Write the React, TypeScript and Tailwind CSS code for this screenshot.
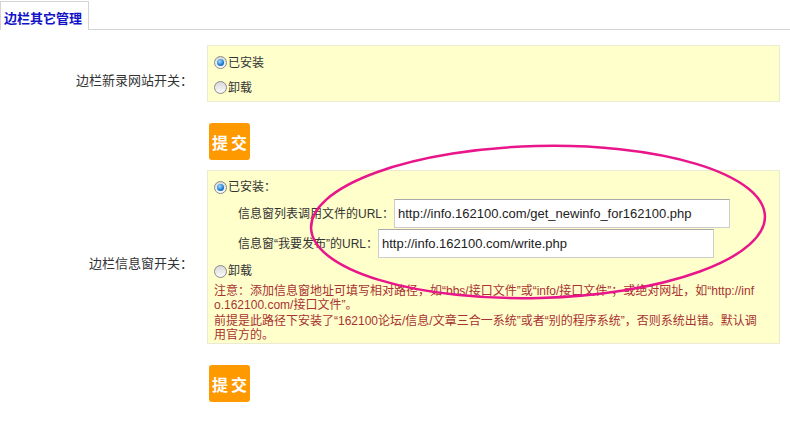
import React from "react";

const Radio = ({ checked }: { checked?: boolean }) => (
  <span className="inline-flex w-[13px] h-[13px] shrink-0 items-center justify-center rounded-full border border-[#8a8a8a] bg-linear-to-b from-[#d9d9d9] to-[#fbfbfb]">
    {checked && (
      <span className="block w-[7px] h-[7px] rounded-full bg-[radial-gradient(circle_at_40%_35%,#9fdcff,#1a78d0_60%,#0b4f9c)]" />
    )}
  </span>
);

const SubmitBtn = () => (
  <button className="ml-[2px] w-[41px] h-[37px] rounded-[3px] bg-[#ff9900] text-white font-bold text-[16px] leading-none tracking-[3px] pl-[3px] font-['Noto_Sans_CJK_SC',sans-serif]">
    提交
  </button>
);

export default function App() {
  return (
    <div className="relative w-[790px] h-[433px] overflow-hidden bg-white text-[#333] font-['Liberation_Sans','Noto_Sans_CJK_SC',sans-serif]">
      {/* Tab bar */}
      <div className="flex h-[30px] border-b border-[#d4d4d4]">
        <div className="mt-[1px] h-[29px] w-[89px] border-l border-t border-r border-[#d4d4d4] bg-white pl-[3px] pt-[8px] text-[13px] leading-[16px] font-bold text-[#1212c8] font-['Noto_Sans_CJK_SC',sans-serif]">
          边栏其它管理
        </div>
      </div>

      <div className="mt-[15px] grid grid-cols-[207px_573px]">
        {/* Row 1 */}
        <div className="flex items-center justify-end pr-[14px] pt-[13px] text-[13px] leading-[18px] font-['Noto_Sans_CJK_SC',sans-serif]">
          边栏新录网站开关：
        </div>
        <div className="border border-[#ebebd2] bg-[#ffffcc] pl-[6px] pt-[4px] pb-[1px] text-[12px]">
          <div className="flex h-[25px] items-center">
            <Radio checked />
            <span className="ml-[1px] leading-[16px]">已安装</span>
          </div>
          <div className="flex h-[25px] items-center">
            <Radio />
            <span className="ml-[1px] leading-[16px]">卸载</span>
          </div>
        </div>

        <div />
        <div className="mt-[21px]">
          <SubmitBtn />
        </div>

        {/* Row 2 */}
        <div className="mt-[10px] flex items-center justify-end pr-[14px] pt-[12px] text-[13px] leading-[18px] font-['Noto_Sans_CJK_SC',sans-serif]">
          边栏信息窗开关：
        </div>
        <div className="mt-[10px] border border-[#ebebd2] bg-[#ffffcc] pl-[6px] pr-[4px] pt-[7px] text-[12px]">
          <div className="flex h-[18px] items-center">
            <Radio checked />
            <span className="ml-[1px] leading-[16px]">已安装：</span>
          </div>
          <div className="mt-[3px] ml-[24px] flex items-center">
            <span className="whitespace-nowrap leading-[16px]">信息窗列表调用文件的URL：</span>
            <div className="flex h-[29px] w-[336px] items-center border border-[#cdcdcd] border-t-[#a9a9a9] bg-white px-[3px] text-[13px] text-[#222] font-['Liberation_Sans',sans-serif]">
              http://info.162100.com/get_newinfo_for162100.php
            </div>
          </div>
          <div className="mt-[1px] ml-[24px] flex items-center">
            <span className="whitespace-nowrap leading-[16px]">信息窗“我要发布”的URL：</span>
            <div className="flex h-[29px] w-[336px] items-center border border-[#cdcdcd] border-t-[#a9a9a9] bg-white px-[3px] text-[13px] text-[#222] font-['Liberation_Sans',sans-serif]">
              http://info.162100.com/write.php
            </div>
          </div>
          <div className="mt-[4px] flex h-[18px] items-center">
            <Radio />
            <span className="ml-[1px] leading-[16px]">卸载</span>
          </div>
          <div className="mt-[4px] text-[12px] leading-[14px] text-[#a83232] whitespace-nowrap">
            注意：添加信息窗地址可填写相对路径，如“bbs/接口文件”或“info/接口文件”；或绝对网址，如“http://inf
            <br />
            o.162100.com/接口文件”。
          </div>
          <div className="mt-[2px] pb-[1px] text-[12px] leading-[14px] text-[#a83232] whitespace-nowrap">
            前提是此路径下安装了“162100论坛/信息/文章三合一系统”或者“别的程序系统”，否则系统出错。默认调
            <br />
            用官方的。
          </div>
        </div>

        <div />
        <div className="mt-[21px]">
          <SubmitBtn />
        </div>
      </div>

      {/* Annotation ellipse */}
      <svg
        className="pointer-events-none absolute left-0 top-0"
        width="790"
        height="433"
        viewBox="0 0 790 433"
      >
        <ellipse
          cx="538"
          cy="222"
          rx="227"
          ry="76"
          transform="rotate(-1.5 538 222)"
          fill="none"
          stroke="#e8168a"
          strokeWidth="2.5"
        />
      </svg>
    </div>
  );
}
